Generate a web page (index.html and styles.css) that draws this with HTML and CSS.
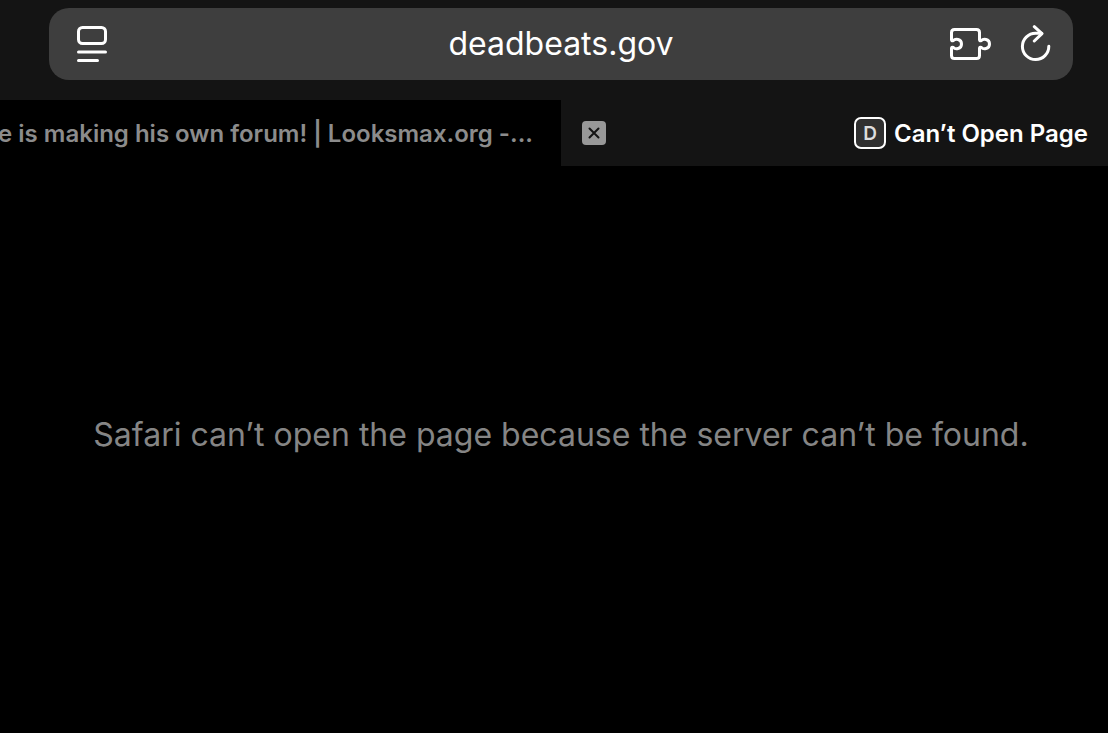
FILE: index.html
```html
<!DOCTYPE html>
<html lang="en">
<head>
  <meta charset="UTF-8">
  <meta name="viewport" content="width=device-width, initial-scale=1.0">
  <title>Can’t Open Page</title>
  <link rel="stylesheet" href="styles.css">
</head>
<body>
  <header class="toolbar">
    <form class="address-bar">
      <div class="side">
        <button type="button" class="icon-button" aria-label="Page menu">
          <svg width="30" height="38" viewBox="0 0 30 38">
            <rect x="1.5" y="2.5" width="27" height="16" rx="4"/>
            <path d="M1.5 27h27M1.5 35.5h19"/>
          </svg>
        </button>
      </div>
      <input class="address" type="text" value="deadbeats.gov" aria-label="Address" spellcheck="false">
      <div class="side side-right">
        <button type="button" class="icon-button" aria-label="Extensions">
          <svg width="42" height="38" viewBox="0 -3 42 38">
            <path d="M1.5 4.5q0-3 3-3h22q3 0 3 3v7q0 1.8 1.8 1.2C33 10.5 39.5 10.5 39.5 16S33 21.5 31.3 19.3q-1.8-.6-1.8 1.2v7q0 3-3 3h-22q-3 0-3-3v-7q0-1.8 1.8-1.2C5 21.5 11.5 21.5 11.5 16S5 10.5 3.3 12.7q-1.8.6-1.8-1.2z"/>
          </svg>
        </button>
        <button type="button" class="icon-button" aria-label="Reload">
          <svg width="32" height="38" viewBox="0 0 32 38">
            <path d="M28.8 21.3A13.2 13.2 0 1 1 15.6 8.2h6"/>
            <path d="M14.3 1.7L22 8.6L14.3 16"/>
          </svg>
        </button>
      </div>
    </form>
  </header>

  <nav class="tabs">
    <a class="tab tab-back" href="#forum"><span>e is making his own forum! | Looksmax.org -...</span></a>
    <div class="tab tab-active">
      <button type="button" class="close" aria-label="Close tab">
        <svg width="12" height="12" viewBox="0 0 12 12">
          <path d="M1.5 1.5l9 9M10.5 1.5l-9 9"/>
        </svg>
      </button>
      <a class="tab-title" href="#page"><span class="favicon">D</span>Can’t Open Page</a>
    </div>
  </nav>

  <main class="page">
    <p class="message">Safari can’t open the page because the server can’t be found.</p>
  </main>
</body>
</html>
```
FILE: styles.css
```css
* {
  box-sizing: border-box;
}
body {
  margin: 0;
  min-height: 100vh;
  display: flex;
  flex-direction: column;
  background-color: #000;
  color: #fff;
  font-family: Inter, "Liberation Sans", sans-serif;
  overflow-x: hidden;
}
button {
  border: 0;
  padding: 0;
  background: none;
  color: inherit;
}
a {
  color: inherit;
  text-decoration: none;
}
svg {
  display: block;
  fill: none;
  stroke: currentColor;
  stroke-width: 3;
  stroke-linecap: round;
  stroke-linejoin: round;
}

/* address bar */
.toolbar {
  padding: 8px 35px 20px 49px;
  background-color: #141414;
}
.address-bar {
  display: flex;
  align-items: center;
  height: 72px;
  padding: 0 21px 0 28px;
  border-radius: 20px;
  background-color: #3e3e3e;
}
.side {
  display: flex;
  flex: 0 0 102px;
}
.side-right {
  justify-content: flex-end;
  gap: 28px;
}
.address {
  flex: 1;
  min-width: 0;
  padding: 0 7px 0 0;
  border: 0;
  outline: 0;
  background: none;
  color: inherit;
  font-family: inherit;
  font-size: 32px;
  line-height: 44px;
  text-align: center;
}

/* tabs */
.tabs {
  display: flex;
  height: 66px;
  background-color: #141414;
  font-size: 24px;
  font-weight: 600;
  white-space: nowrap;
}
.tab {
  display: flex;
  align-items: center;
}
.tab-back {
  flex: 0 1 561px;
  justify-content: flex-end;
  padding-right: 28px;
  overflow: hidden;
  background-color: #000;
  color: #8c8c8c;
}
.tab-active {
  flex: 1;
  justify-content: space-between;
  padding: 0 20px 0 21px;
}
.close {
  display: grid;
  place-items: center;
  width: 24px;
  height: 24px;
  border-radius: 4px;
  background-color: #989898;
  color: #141414;
}
.close svg {
  stroke-width: 2;
}
.tab-title {
  display: flex;
  align-items: center;
  gap: 8px;
}
.favicon {
  display: grid;
  place-items: center;
  width: 32px;
  height: 32px;
  border: 2px solid #fff;
  border-radius: 7px;
  background-color: #303030;
  color: #ddd;
  font-size: 19px;
  font-weight: 600;
}

/* error page */
.page {
  flex: 1;
  display: flex;
  align-items: center;
  justify-content: center;
  padding: 0 35px 30px 49px;
}
.message {
  margin: 0;
  color: #858585;
  font-size: 32px;
  line-height: 44px;
  text-align: center;
}
```
